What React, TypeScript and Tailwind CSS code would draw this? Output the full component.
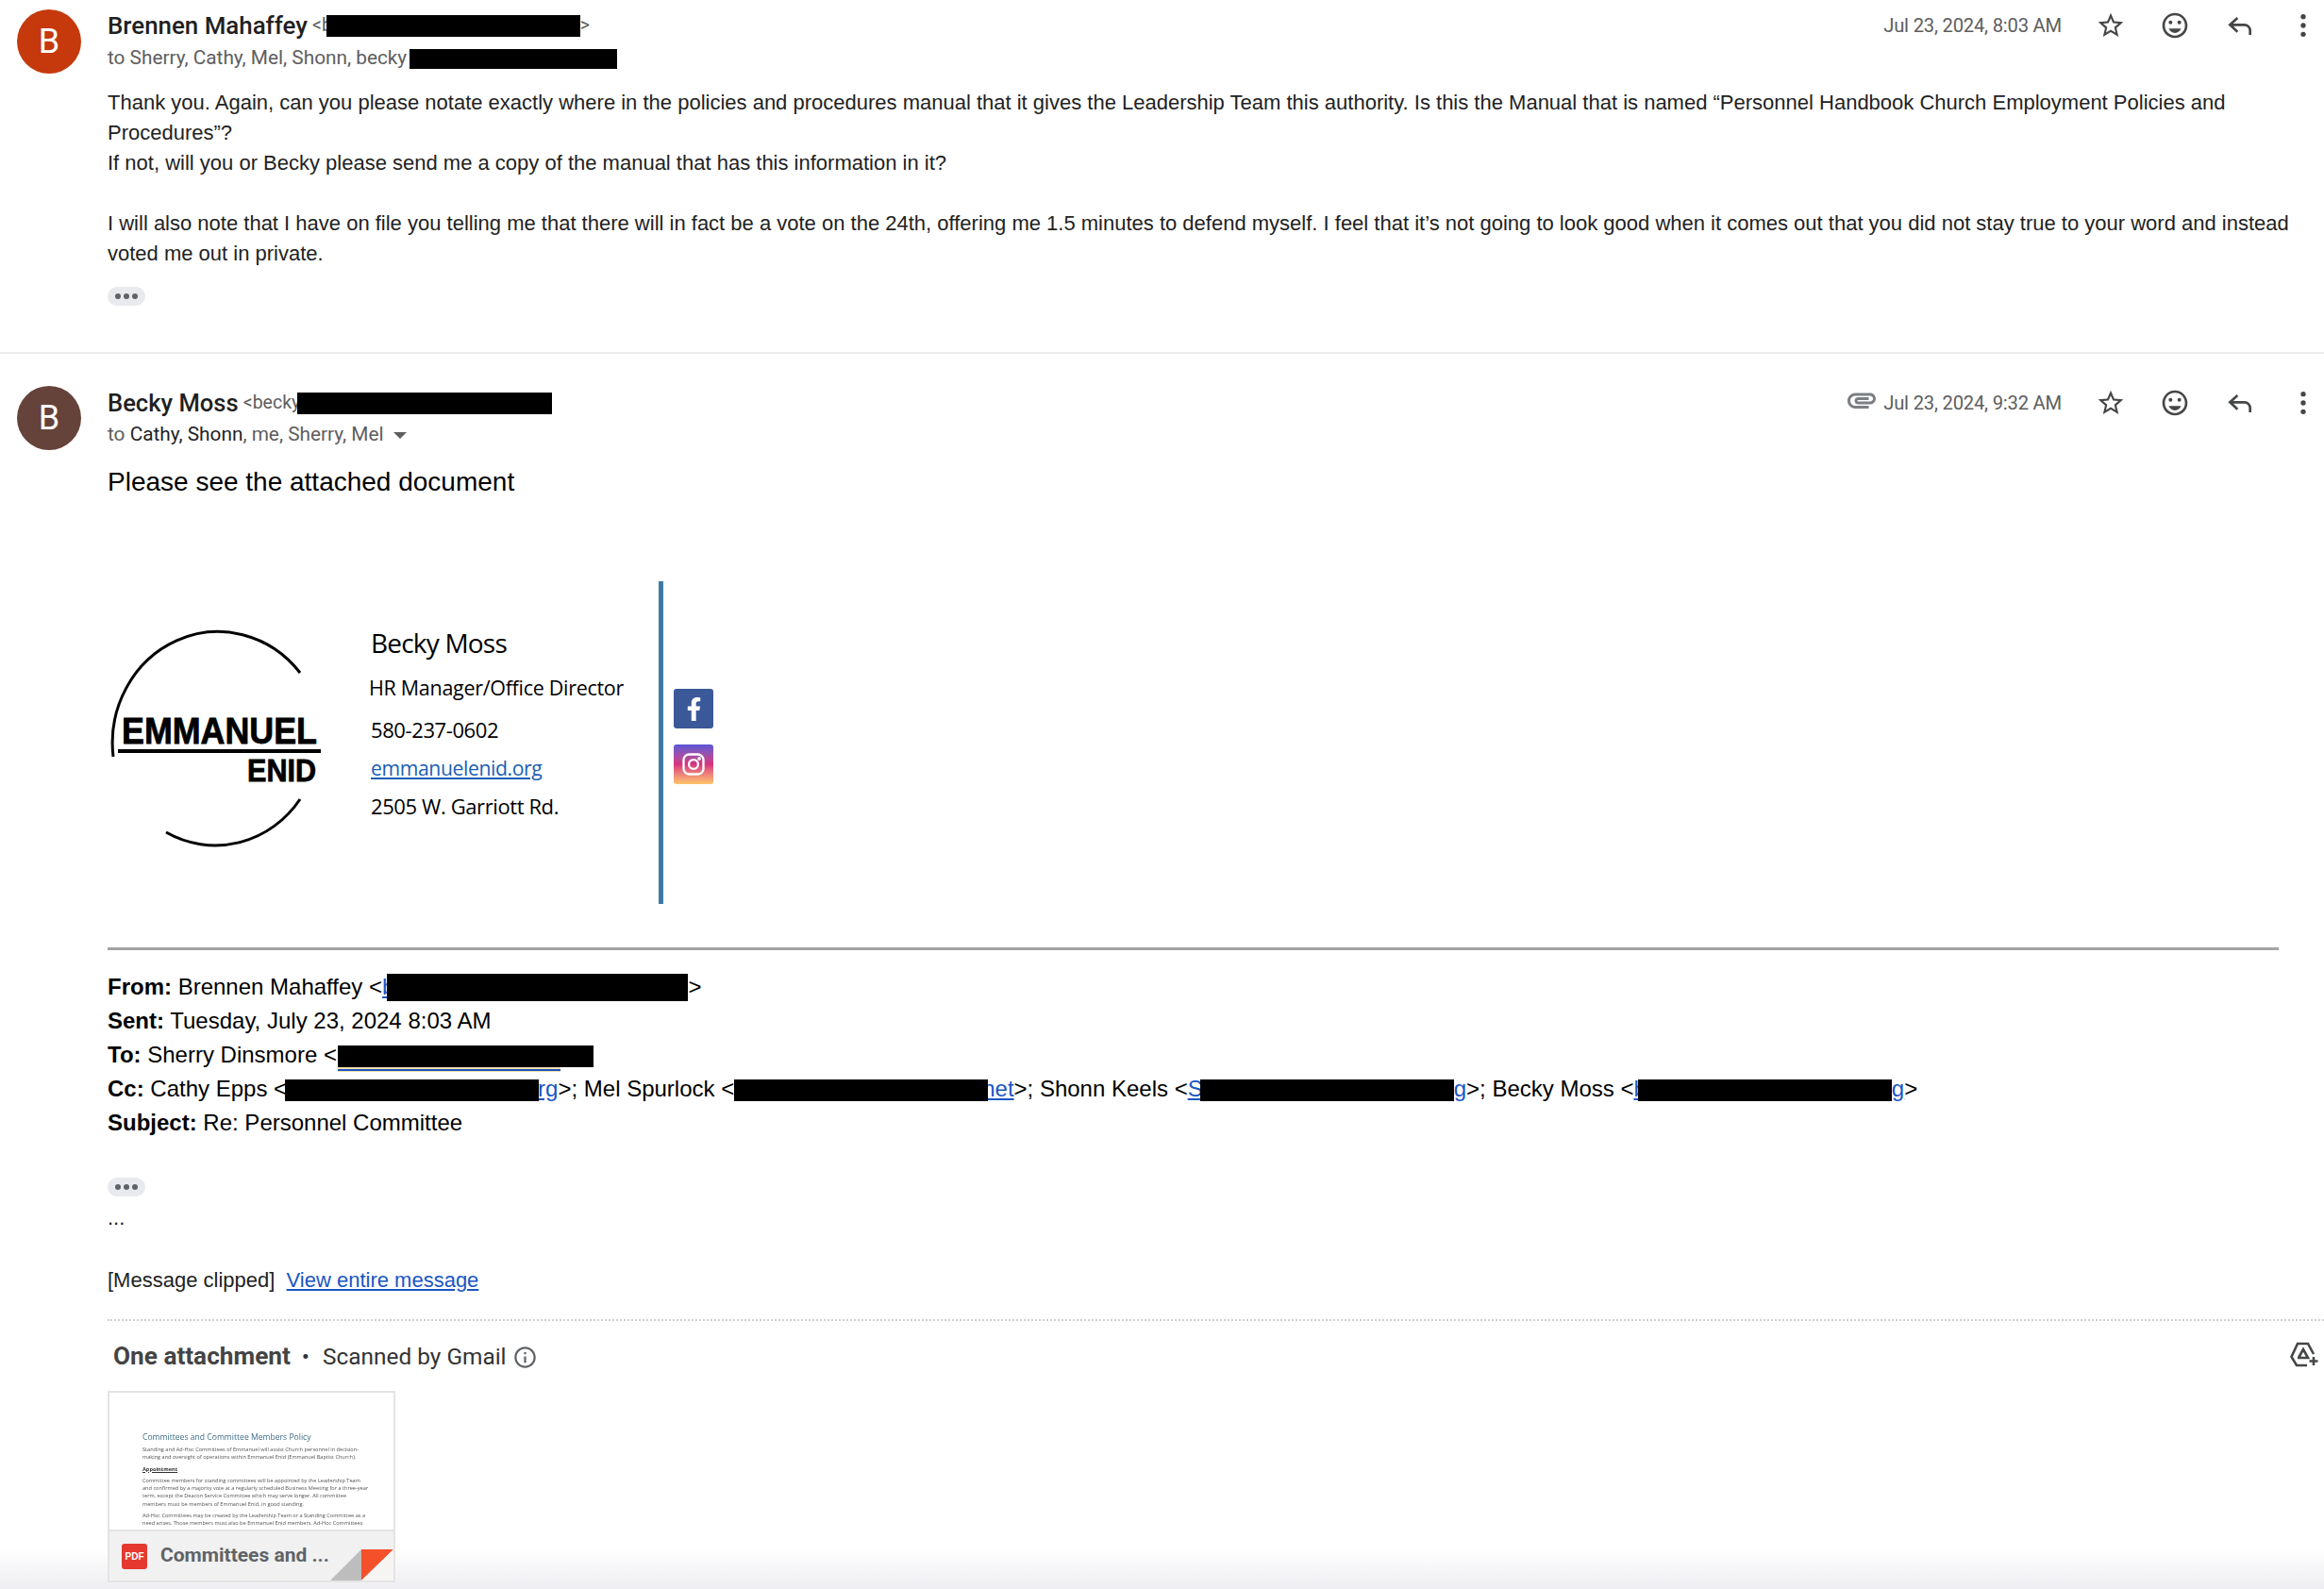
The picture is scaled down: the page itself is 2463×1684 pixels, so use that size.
const Star = () => (
  <svg viewBox="0 0 24 24" className="w-8 h-8 fill-[#444746]">
    <path d="M22 9.24l-7.19-.62L12 2 9.19 8.63 2 9.24l5.46 4.73L5.82 21 12 17.27 18.18 21l-1.63-7.03L22 9.24zM12 15.4l-3.76 2.27 1-4.28-3.32-2.88 4.38-.38L12 6.1l1.71 4.04 4.38.38-3.32 2.88 1 4.28L12 15.4z" />
  </svg>
);
const Smile = () => (
  <svg viewBox="0 0 24 24" className="w-8 h-8 fill-[#444746]">
    <circle cx="15.5" cy="9.5" r="1.5" />
    <circle cx="8.5" cy="9.5" r="1.5" />
    <path d="M12 18c2.3 0 4.2-1.5 4.9-3.5H7.1c.7 2 2.6 3.5 4.9 3.5z" />
    <path d="M11.99 2C6.47 2 2 6.48 2 12s4.47 10 9.99 10C17.52 22 22 17.52 22 12S17.52 2 11.99 2zM12 20c-4.42 0-8-3.58-8-8s3.58-8 8-8 8 3.58 8 8-3.58 8-8 8z" />
  </svg>
);
const Reply = () => (
  <svg viewBox="0 0 24 24" className="w-8 h-8 fill-none stroke-[#444746] stroke-2">
    <path d="M10 6l-6 5.5 6 5.5M4 11.5h11.5a4.5 4.5 0 0 1 4.5 4.5v3.5" />
  </svg>
);
const Dots = () => (
  <svg viewBox="0 0 24 24" className="w-8 h-8 fill-[#444746]">
    <circle cx="12" cy="5" r="2" />
    <circle cx="12" cy="12" r="2" />
    <circle cx="12" cy="19" r="2" />
  </svg>
);

const Actions = ({ date, clip }: { date: string; clip?: boolean }) => (
  <div className="flex items-center h-[34px] pr-[6px] shrink-0">
    {clip && (
      <svg viewBox="0 0 24 24" className="w-[36px] h-[36px] fill-[#7b7e82] mr-[8px] translate-x-[3px] -translate-y-[3px]">
        <path d="M2 12.5C2 9.46 4.46 7 7.5 7H18c2.21 0 4 1.79 4 4s-1.79 4-4 4H9.5C8.12 15 7 13.88 7 12.5S8.12 10 9.5 10H17v2H9.41c-.55 0-.55 1 0 1H18c1.1 0 2-.9 2-2s-.9-2-2-2H7.5C5.57 9 4 10.57 4 12.5S5.57 16 7.5 16H17v2H7.5C4.46 18 2 15.54 2 12.5z" />
      </svg>
    )}
    <span className="text-[20.2px] tracking-[-0.2px] text-[#5e5e5e] mr-[36px]">{date}</span>
    <div className="mr-[36px]"><Star /></div>
    <div className="mr-[37px]"><Smile /></div>
    <div className="mr-[35px]"><Reply /></div>
    <Dots />
  </div>
);

const Bar = ({ w, h = 23, off = -5, left = 0, right = 0 }: { w: number; h?: number; off?: number; left?: number; right?: number }) => (
  <span
    className="relative inline-block bg-black"
    style={{ width: w, height: h, verticalAlign: off, marginLeft: left, marginRight: right }}
  />
);

const Pill = () => (
  <div className="w-[40px] h-[20px] rounded-[10px] bg-[#e8eaed] flex items-center justify-center gap-[3px]">
    <span className="w-[6px] h-[6px] rounded-full bg-[#5f6368]" />
    <span className="w-[6px] h-[6px] rounded-full bg-[#5f6368]" />
    <span className="w-[6px] h-[6px] rounded-full bg-[#5f6368]" />
  </div>
);

const Avatar = ({ color }: { color: string }) => (
  <div
    className="w-[68px] h-[68px] rounded-full shrink-0 flex items-center justify-center text-white text-[36px] font-['Roboto',sans-serif]"
    style={{ background: color }}
  >
    B
  </div>
);

const Logo = () => (
  <svg viewBox="0 0 230 342" className="w-[230px] h-[342px] shrink-0">
    <path d="M6 186 A112 118 0 0 1 204 97" fill="none" stroke="#000" strokeWidth="3" />
    <path d="M204 231 A110 116 0 0 1 62 266" fill="none" stroke="#000" strokeWidth="3" />
    <text x="15" y="172" fontFamily="'Liberation Sans',sans-serif" fontWeight="700" fontSize="39" stroke="#000" strokeWidth="0.8" textLength="207" lengthAdjust="spacingAndGlyphs">EMMANUEL</text>
    <rect x="11" y="178" width="215" height="4" fill="#000" />
    <text x="148" y="212" fontFamily="'Liberation Sans',sans-serif" fontWeight="700" fontSize="33" stroke="#000" strokeWidth="0.8" textLength="73" lengthAdjust="spacingAndGlyphs">ENID</text>
  </svg>
);

const Facebook = () => (
  <div className="w-[42px] h-[42px] rounded-[3px] bg-[#3b5998] flex items-center justify-center">
    <svg viewBox="0 0 320 512" className="w-[17px] h-[25px] fill-white">
      <path d="M279.14 288l14.22-92.66h-88.91v-60.13c0-25.35 12.42-50.06 52.24-50.06h40.42V6.26S260.43 0 225.36 0c-73.22 0-121.08 44.38-121.08 124.72v70.62H22.89V288h81.39v224h100.17V288z" />
    </svg>
  </div>
);

const Instagram = () => (
  <div className="w-[42px] h-[42px] rounded-[3px] bg-gradient-to-b from-[#5a54d6] via-[#d6317f] to-[#fdc468] flex items-center justify-center">
    <svg viewBox="0 0 24 24" className="w-[28px] h-[28px] fill-none stroke-white stroke-[2]">
      <rect x="3" y="3" width="18" height="18" rx="5" />
      <circle cx="12" cy="12" r="4.2" />
      <circle cx="17.2" cy="6.8" r="0.6" className="fill-white" />
    </svg>
  </div>
);

const DriveAdd = () => (
  <svg viewBox="0 0 30 27" className="w-[30px] h-[27px] fill-none stroke-[#444746] stroke-[2.6] -translate-y-[3px]">
    <path d="M18 25H7L1.5 16 8 2h11l6 11" />
    <path d="M8 17h11l-5-9-5 9" />
    <path d="M25 16v9M20.5 20.5h9" />
  </svg>
);

const Info = () => (
  <svg viewBox="0 0 24 24" className="w-[27px] h-[27px] fill-[#5f6368]">
    <path d="M11 7h2v2h-2zm0 4h2v6h-2zm1-9C6.48 2 2 6.48 2 12s4.48 10 10 10 10-4.48 10-10S17.52 2 12 2zm0 18c-4.41 0-8-3.59-8-8s3.59-8 8-8 8 3.59 8 8-3.59 8-8 8z" />
  </svg>
);

const Link = ({ children }: { children: React.ReactNode }) => (
  <span className="text-[#1a56c4] underline">{children}</span>
);

const AttachmentCard = () => (
  <div className="relative z-10 w-[305px] h-[203px] border-2 border-[#e4e4e4] bg-white flex flex-col overflow-hidden">
    <div className="h-[145px] overflow-hidden pl-[35px] pr-[30px] pt-[41px] font-['Open_Sans',sans-serif] text-[#555] text-[5.6px] leading-[8.3px] blur-[0.25px] whitespace-nowrap">
      <div className="text-[#3f6d87] text-[8.6px] leading-[12px] mb-[3px]">Committees and Committee Members Policy</div>
      <div>Standing and Ad-Hoc Committees of Emmanuel will assist Church personnel in decision-</div>
      <div>making and oversight of operations within Emmanuel Enid (Emmanuel Baptist Church).</div>
      <div className="font-bold underline text-[#333] my-[4px]">Appointment</div>
      <div>Committee members for standing committees will be appointed by the Leadership Team</div>
      <div>and confirmed by a majority vote at a regularly scheduled Business Meeting for a three-year</div>
      <div>term, except the Deacon Service Committee which may serve longer. All committee</div>
      <div>members must be members of Emmanuel Enid, in good standing.</div>
      <div className="mt-[4px]">Ad-Hoc Committees may be created by the Leadership Team or a Standing Committee as a</div>
      <div>need arises. Those members must also be Emmanuel Enid members. Ad-Hoc Committees</div>
    </div>
    <div className="flex-1 border-t-2 border-[#e4e4e4] bg-[#f1f1f1] flex items-center pl-[13px] gap-[14px]">
      <div className="w-[27px] h-[27px] rounded-[3px] bg-[#e5392f] text-white text-[10px] font-bold flex items-center justify-center font-['Liberation_Sans',sans-serif]">PDF</div>
      <span className="text-[21px] font-bold text-[#5f6368] font-['Roboto',sans-serif]">Committees and ...</span>
    </div>
    <svg viewBox="0 0 67 33" className="absolute right-0 bottom-0 w-[67px] h-[33px]">
      <polygon points="0,33 33,0 33,33" fill="#bdbdbd" />
      <polygon points="33,0 67,0 33,33" fill="#f4502a" />
      <polygon points="33,33 67,0 67,33" fill="#f7f5f3" />
    </svg>
  </div>
);

export default function App() {
  return (
    <div className="relative w-[2463px] h-[1684px] overflow-hidden bg-white text-[#222] font-['Roboto',sans-serif]">
      {/* first message */}
      <div className="h-[375px] border-b-2 border-[#ececec] flex pl-[18px] pt-[10px]">
        <Avatar color="#c5390c" />
        <div className="ml-[28px] flex-1 min-w-0">
          <div className="flex justify-between h-[34px]">
            <div className="flex items-center whitespace-nowrap">
              <span className="text-[25.9px] font-medium text-[#1f1f1f]">Brennen Mahaffey</span>
              <span className="text-[19.5px] text-[#5e5e5e] ml-[5px]">&lt;b</span>
              <Bar w={269} left={-6} />
              <span className="text-[19.5px] text-[#5e5e5e]">&gt;</span>
            </div>
            <Actions date="Jul 23, 2024, 8:03 AM" />
          </div>
          <div className="flex items-center h-[32px] mt-[2px] text-[20.8px] text-[#5e5e5e] whitespace-nowrap">
            to Sherry, Cathy, Mel, Shonn, becky
            <Bar w={220} h={21} left={3} />
          </div>
          <div className="mt-[15px] font-['Liberation_Sans',sans-serif] text-[22px] leading-[32px] text-[#222] whitespace-nowrap">
            <div>Thank you. Again, can you please notate exactly where in the policies and procedures manual that it gives the Leadership Team this authority. Is this the Manual that is named “Personnel Handbook Church Employment Policies and</div>
            <div>Procedures”?</div>
            <div>If not, will you or Becky please send me a copy of the manual that has this information in it?</div>
            <div className="h-[32px]" />
            <div>I will also note that I have on file you telling me that there will in fact be a vote on the 24th, offering me 1.5 minutes to defend myself. I feel that it’s not going to look good when it comes out that you did not stay true to your word and instead</div>
            <div>voted me out in private.</div>
          </div>
          <div className="mt-[19px]"><Pill /></div>
        </div>
      </div>

      {/* second message */}
      <div className="flex pl-[18px] pt-[34px]">
        <Avatar color="#66433a" />
        <div className="ml-[28px] flex-1 min-w-0">
          <div className="flex justify-between h-[34px] mt-[1px]">
            <div className="flex items-center whitespace-nowrap">
              <span className="text-[25.6px] font-medium text-[#1f1f1f]">Becky Moss</span>
              <span className="text-[19.5px] text-[#5e5e5e] ml-[5px]">&lt;becky</span>
              <Bar w={270} left={-3} />
            </div>
            <Actions date="Jul 23, 2024, 9:32 AM" clip />
          </div>
          <div className="flex items-center h-[32px] mt-[1px] text-[20.8px] text-[#5e5e5e] whitespace-nowrap">
            to&nbsp;<span className="text-[#1f1f1f]">Cathy, Shonn</span>, me, Sherry, Mel
            <span className="ml-[10px] w-0 h-0 border-x-[7px] border-x-transparent border-t-[7px] border-t-[#5e5e5e]" />
          </div>
          <div className="mt-[14px] leading-[40px] font-['Liberation_Sans',sans-serif] text-[28px] text-black">Please see the attached document</div>

          {/* signature */}
          <div className="mt-[85px] h-[342px] flex font-['Open_Sans',sans-serif] text-black">
            <Logo />
            <div className="w-[308px] ml-[48px] -mr-[2px]">
              <div className="mt-[45px] h-[40px] leading-[40px] text-[28px] tracking-[-0.8px] ml-[1px]">Becky Moss</div>
              <div className="mt-[13px] h-[30px] leading-[30px] text-[21.5px] tracking-[-0.3px] -ml-[1px]">HR Manager/Office Director</div>
              <div className="mt-[14px] h-[30px] leading-[30px] text-[22px] tracking-[-0.4px] ml-[1px]">580-237-0602</div>
              <div className="mt-[11px] h-[30px] leading-[30px] text-[21.2px] tracking-[-0.4px] ml-[1px] text-[#1a5fb4] underline">emmanuelenid.org</div>
              <div className="mt-[10px] h-[30px] leading-[30px] text-[22px] tracking-[-0.4px] ml-[1px]">2505 W. Garriott Rd.</div>
            </div>
            <div className="w-[5px] h-full bg-[#3d7ba6] shrink-0" />
            <div className="ml-[11px] pt-[114px] flex flex-col gap-[17px]">
              <Facebook />
              <Instagram />
            </div>
          </div>

          <div className="mt-[46px] h-[3px] w-[2301px] bg-[#a3a3a3]" />

          {/* quoted header */}
          <div className="mt-[21px] font-['Liberation_Sans',sans-serif] text-[24px] text-black whitespace-nowrap">
            <div className="h-[36px] leading-[36px]"><b>From:</b> Brennen Mahaffey &lt;<Link>b</Link><Bar w={319} h={29} off={-7} left={-8} />&gt;</div>
            <div className="h-[36px] leading-[36px]"><b>Sent:</b> Tuesday, July 23, 2024 8:03 AM</div>
            <div className="h-[36px] leading-[36px]">
              <b>To:</b> Sherry Dinsmore &lt;
              <span className="relative inline-block ml-[1px]" style={{ verticalAlign: -5 }}>
                <span className="block w-[271px] h-[23px]" />
                <span className="absolute left-0 top-[21px] w-[236px] h-[7px] bg-[#f5dfa8]" />
                <span className="absolute left-0 top-[25px] w-[236px] h-[2px] bg-[#1a56c4]" />
                <span className="absolute left-0 top-0 w-[271px] h-[23px] bg-black" />
              </span>
            </div>
            <div className="h-[36px] leading-[36px]">
              <b>Cc:</b> Cathy Epps &lt;<Bar w={269} left={-2} right={-1} /><Link>rg</Link>&gt;; Mel Spurlock &lt;<Bar w={269} right={-6} /><Link>net</Link>&gt;; Shonn Keels &lt;<Link>S</Link><Bar w={269} left={-3} /><Link>g</Link>&gt;; Becky Moss &lt;<Link>b</Link><Bar w={269} left={-9} /><Link>g</Link>&gt;
            </div>
            <div className="h-[36px] leading-[36px]"><b>Subject:</b> Re: Personnel Committee</div>
          </div>

          <div className="mt-[40px]"><Pill /></div>
          <div className="mt-[7px] font-['Liberation_Sans',sans-serif] text-[22px] leading-[32px] text-[#222]">...</div>
          <div className="mt-[34px] font-['Liberation_Sans',sans-serif] text-[22px] leading-[32px] text-[#222]">
            [Message clipped]&nbsp;&nbsp;<Link>View entire message</Link>
          </div>
          <div className="mt-[25px] border-t-2 border-dotted border-[#d0d0d0]" />

          {/* attachments */}
          <div className="mt-[22px] h-[32px] flex items-center justify-between pr-[6px]">
            <div className="flex items-center pl-[6px] text-[24.4px] text-[#333]">
              <span className="font-bold text-[26.2px] text-[#444]">One attachment</span>
              <span className="mx-[12px]">•</span>
              <span className="ml-[2px]">Scanned by Gmail</span>
              <span className="ml-[6px]"><Info /></span>
            </div>
            <DriveAdd />
          </div>
          <div className="mt-[20px]">
            <AttachmentCard />
          </div>
        </div>
      </div>

      {/* bottom fade */}
      <div className="absolute left-0 right-0 bottom-0 h-[44px] bg-gradient-to-b from-[#ffffff00] to-[#eeeef2] pointer-events-none" />
    </div>
  );
}
